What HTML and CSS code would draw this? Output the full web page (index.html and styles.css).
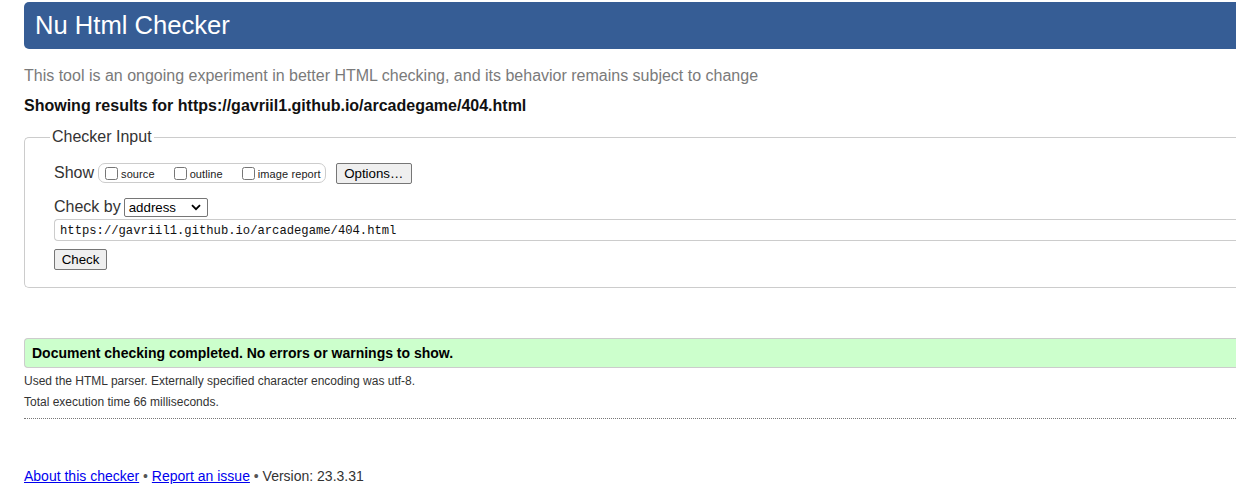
FILE: index.html
```
<!DOCTYPE html>
<html lang="en">
<head>
<meta charset="utf-8">
<title>Showing results for https://gavriil1.github.io/arcadegame/404.html - Nu Html Checker</title>
<link rel="stylesheet" href="styles.css">
</head>
<body>
<div class="page">
  <h1 class="title">Nu Html Checker</h1>
  <p class="intro">This tool is an ongoing experiment in better HTML checking, and its behavior remains subject to change</p>
  <p class="showing">Showing results for https://gavriil1.github.io/arcadegame/404.html</p>
  <form class="checker">
    <fieldset class="input-set">
      <legend class="legend">Checker Input</legend>
      <div class="row row-show">
        <span class="label">Show</span>
        <span class="show-box">
          <label class="opt"><input type="checkbox" class="cb"><span class="opt-text">source</span></label>
          <label class="opt"><input type="checkbox" class="cb"><span class="opt-text">outline</span></label>
          <label class="opt"><input type="checkbox" class="cb"><span class="opt-text">image report</span></label>
        </span>
        <button type="button" class="btn btn-options">Options…</button>
      </div>
      <div class="row row-by">
        <span class="label">Check by</span>
        <span class="select"><span>address</span><svg class="chev" width="10" height="7" viewBox="0 0 10 7"><path d="M1 1.2 L5 5.2 L9 1.2" fill="none" stroke="#000" stroke-width="1.8"/></svg></span>
      </div>
      <div class="url">https://gavriil1.github.io/arcadegame/404.html</div>
      <div class="row-check"><button type="button" class="btn btn-check">Check</button></div>
    </fieldset>
  </form>
  <div class="success">Document checking completed. No errors or warnings to show.</div>
  <p class="meta">Used the HTML parser. Externally specified character encoding was utf-8.</p>
  <p class="meta">Total execution time 66 milliseconds.</p>
  <hr class="sep">
  <p class="footer"><a href="#" class="link">About this checker</a> <span class="dot">•</span> <a href="#" class="link">Report an issue</a> <span class="dot">•</span> Version: 23.3.31</p>
</div>
</body>
</html>
```
FILE: styles.css
```
html, body {
  margin: 0;
  padding: 0;
  background: #fff;
  overflow: hidden;
}
body {
  font-family: "Liberation Sans", Arial, sans-serif;
  color: #111;
}
.page {
  width: 1300px;
  padding: 0 0 0 24px;
}
.title {
  margin: 2px 0 0;
  height: 47px;
  line-height: 46px;
  padding-left: 11px;
  background: #365d95;
  color: #fff;
  font-size: 25.6px;
  font-weight: normal;
  border-radius: 5px 0 0 5px;
}
.intro {
  margin: 17px 0 0;
  line-height: 20px;
  font-size: 16px;
  color: #7a7a7a;
}
.showing {
  margin: 10px 0 0;
  line-height: 20px;
  font-size: 16px;
  font-weight: bold;
  color: #111;
}
.checker {
  margin: 11px 0 0;
}
.input-set {
  margin: 0;
  padding: 0 0 17px 29px;
  border: 1px solid #ccc;
  border-right: none;
  border-radius: 5px 0 0 5px;
  min-width: 0;
}
.legend {
  padding: 0 2px;
  margin-left: -4px;
  line-height: 20px;
  font-size: 16px;
  color: #333;
}
.row {
  display: flex;
  align-items: center;
  height: 22px;
}
.row-show {
  margin-top: 15px;
}
.row-by {
  margin-top: 12px;
}
.label {
  font-size: 16px;
  color: #333;
}
.show-box {
  display: flex;
  align-items: center;
  margin-left: 4px;
  height: 18px;
  padding: 0 4px 0 6px;
  border: 1px solid #ccc;
  border-radius: 7px;
}
.opt {
  display: flex;
  align-items: center;
  font-size: 11px;
  color: #222;
  margin-right: 19px;
}
.opt:last-child {
  margin-right: 0;
}
.opt-text {
  padding-top: 2px;
  letter-spacing: 0.1px;
}
.cb {
  width: 13px;
  height: 13px;
  margin: 0 3px 0 0;
}
.btn {
  font-family: "Liberation Sans", Arial, sans-serif;
  font-size: 13.3px;
  color: #000;
  background: #efefef;
  border: 1px solid #767676;
  border-radius: 2px;
  padding: 0 6px;
  height: 21px;
  line-height: 19px;
}
.btn-options {
  margin-left: 10px;
  width: 76px;
}
.select {
  display: inline-flex;
  align-items: center;
  justify-content: space-between;
  margin-left: 3px;
  width: 84px;
  height: 19px;
  box-sizing: border-box;
  border: 1px solid #767676;
  border-radius: 2px;
  padding: 0 6px 0 4px;
  font-size: 13.3px;
  color: #000;
}
.url {
  margin-top: 1px;
  height: 22px;
  box-sizing: border-box;
  border: 1px solid #ccc;
  border-right: none;
  border-radius: 4px 0 0 4px;
  padding: 1px 0 0 5px;
  line-height: 20px;
  font-family: "Liberation Mono", "DejaVu Sans Mono", monospace;
  font-size: 12.2px;
  color: #111;
}
.row-check {
  margin-top: 8px;
  display: flex;
}
.btn-check {
  width: 53px;
}
.success {
  margin-top: 50px;
  height: 30px;
  box-sizing: border-box;
  line-height: 28px;
  padding-left: 7px;
  background: #ccffcc;
  border: 1px solid #ccc;
  border-right: none;
  border-radius: 4px 0 0 4px;
  font-size: 14px;
  font-weight: bold;
  color: #000;
}
.meta {
  margin: 3px 0 0;
  line-height: 21px;
  font-size: 12px;
  color: #333;
}
.meta + .meta {
  margin-top: 0;
}
.sep {
  margin: 5px 0 0;
  border: none;
  border-top: 1px dotted #777;
  height: 0;
}
.footer {
  margin: 47px 0 0;
  line-height: 20px;
  font-size: 14px;
  color: #333;
}
.link {
  color: #0000ee;
  text-decoration: underline;
}
.dot {
  color: #555;
}
```
